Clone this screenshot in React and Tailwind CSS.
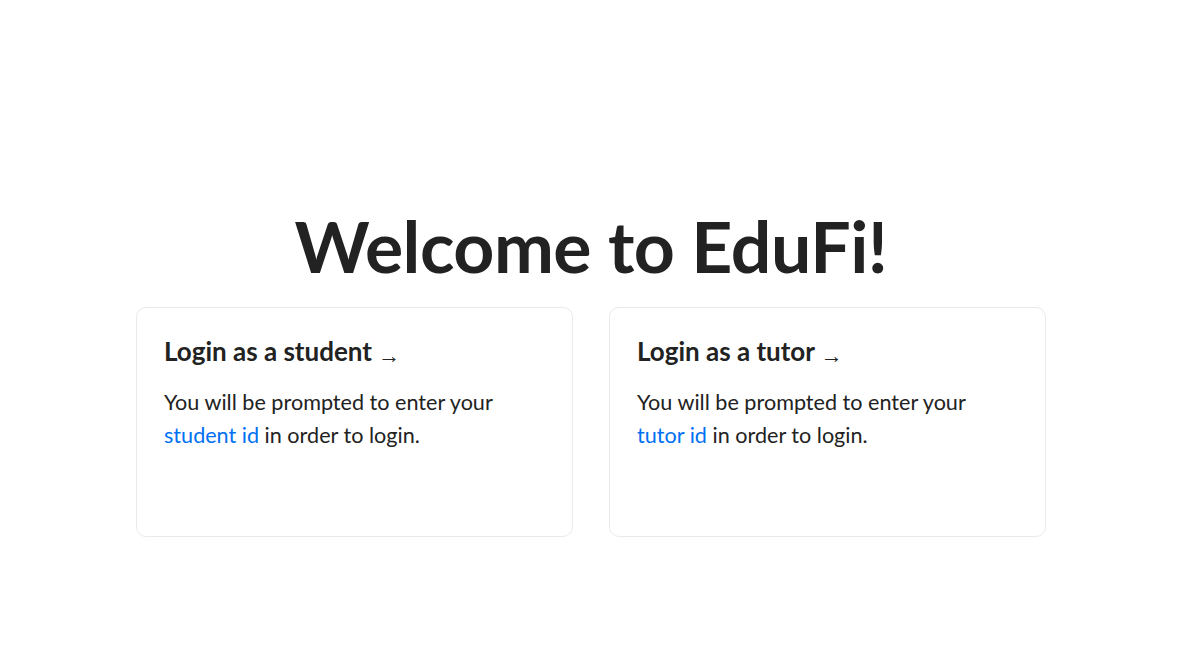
const CARDS = [
  { title: 'Login as a student', id: 'student id' },
  { title: 'Login as a tutor', id: 'tutor id' },
]

export default function App() {
  return (
    <div className="min-h-[664px] bg-white text-[#222] font-['Lato','Liberation_Sans',sans-serif] flex flex-col items-center pt-[204px] pr-[7px]">
      <h1 className="text-[71.6px] font-bold leading-[1.15] tracking-[-0.5px] m-0">Welcome to EduFi!</h1>
      <div className="flex gap-[36px] mt-[21px]">
        {CARDS.map((card) => (
          <a
            key={card.id}
            href="#"
            className="w-[437px] h-[230px] border border-[#eaeaea] rounded-[10px] px-[27px] pt-[24px] block"
          >
            <h2 className="text-[26px] font-bold leading-[1.5] mb-[15px]">
              {card.title}{' '}
              <span className="font-normal text-[22px] font-['Liberation_Sans',sans-serif] relative top-[2px]">&rarr;</span>
            </h2>
            <p className="text-[21.6px] leading-[1.52] max-w-[360px]">
              You will be prompted to enter your <span className="text-[#0070f3]">{card.id}</span> in order to login.
            </p>
          </a>
        ))}
      </div>
    </div>
  )
}
